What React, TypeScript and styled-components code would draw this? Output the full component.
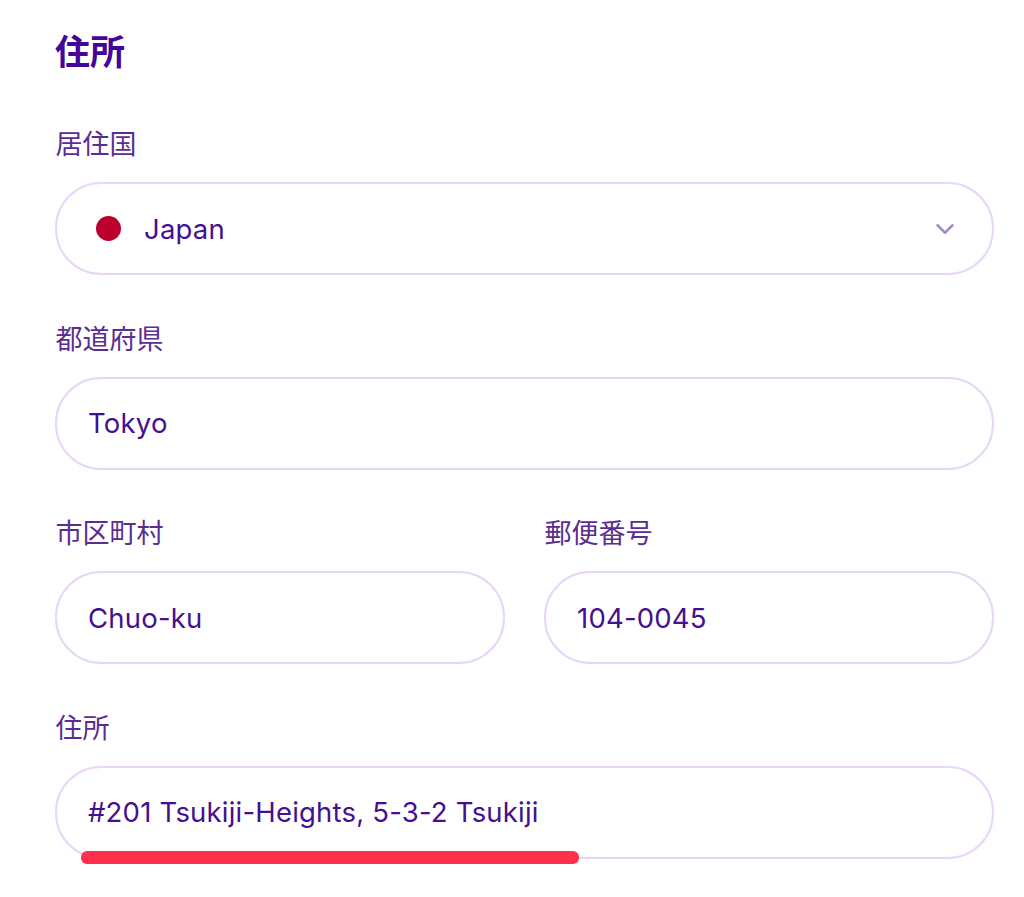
import React from "react";
import styled, { createGlobalStyle } from "styled-components";
import { ChevronDown } from "lucide-react";

const Global = createGlobalStyle`
  html, body { margin: 0; padding: 0; background: #fff; }
  body { font-family: Inter, "Noto Sans CJK JP", sans-serif; }
`;

const Page = styled.main`
  width: 1024px;
  height: 897px;
  box-sizing: border-box;
  padding: 26px 30px 0 55px;
  display: flex;
  flex-direction: column;
  overflow: hidden;
`;

const Title = styled.h1`
  margin: 0 0 49px;
  height: 48px;
  font: 700 35px/48px "Noto Sans CJK JP", sans-serif;
  color: #44059a;
`;

const Form = styled.div`
  display: flex;
  flex-direction: column;
  gap: 42.5px;
`;

const Row = styled.div`
  display: grid;
  grid-template-columns: 450px 450px;
  gap: 39px;
`;

const Field = styled.div`
  display: flex;
  flex-direction: column;
  gap: 19px;
  position: relative;
`;

const Label = styled.label`
  height: 40px;
  margin-left: 0.5px;
  font: 400 27px/40px "Noto Sans CJK JP", sans-serif;
  color: #5a2d91;
`;

const Control = styled.div`
  height: 93px;
  box-sizing: border-box;
  border: 2px solid #e8d5f7;
  border-radius: 46px;
  display: flex;
  align-items: center;
  padding: 0 32px 0 31px;
  background: #fff;
  font: 400 27.5px/36px Inter, "Noto Sans", sans-serif;
  letter-spacing: 0.2px;
  color: #45108f;
`;

const Flag = styled.span`
  width: 25px;
  height: 25px;
  border-radius: 50%;
  background: #bc002d;
  margin: 0 23px 0 8px;
  flex: none;
`;

const Grow = styled.span`
  flex: 1;
`;

const Chevron = styled(ChevronDown)`
  color: #a88bc9;
  flex: none;
`;

const Mark = styled.div`
  position: absolute;
  left: 26px;
  bottom: -5px;
  width: 498px;
  height: 13px;
  border-radius: 6px;
  background: #fd304e;
`;

export default function App() {
  return (
    <Page>
      <Global />
      <Title>住所</Title>
      <Form>
        <Field>
          <Label>居住国</Label>
          <Control>
            <Flag />
            <Grow>Japan</Grow>
            <Chevron size={30} strokeWidth={2} />
          </Control>
        </Field>
        <Field>
          <Label>都道府県</Label>
          <Control>Tokyo</Control>
        </Field>
        <Row>
          <Field>
            <Label>市区町村</Label>
            <Control>Chuo-ku</Control>
          </Field>
          <Field>
            <Label>郵便番号</Label>
            <Control>104-0045</Control>
          </Field>
        </Row>
        <Field>
          <Label>住所</Label>
          <Control>#201 Tsukiji-Heights, 5-3-2 Tsukiji</Control>
          <Mark />
        </Field>
      </Form>
    </Page>
  );
}
